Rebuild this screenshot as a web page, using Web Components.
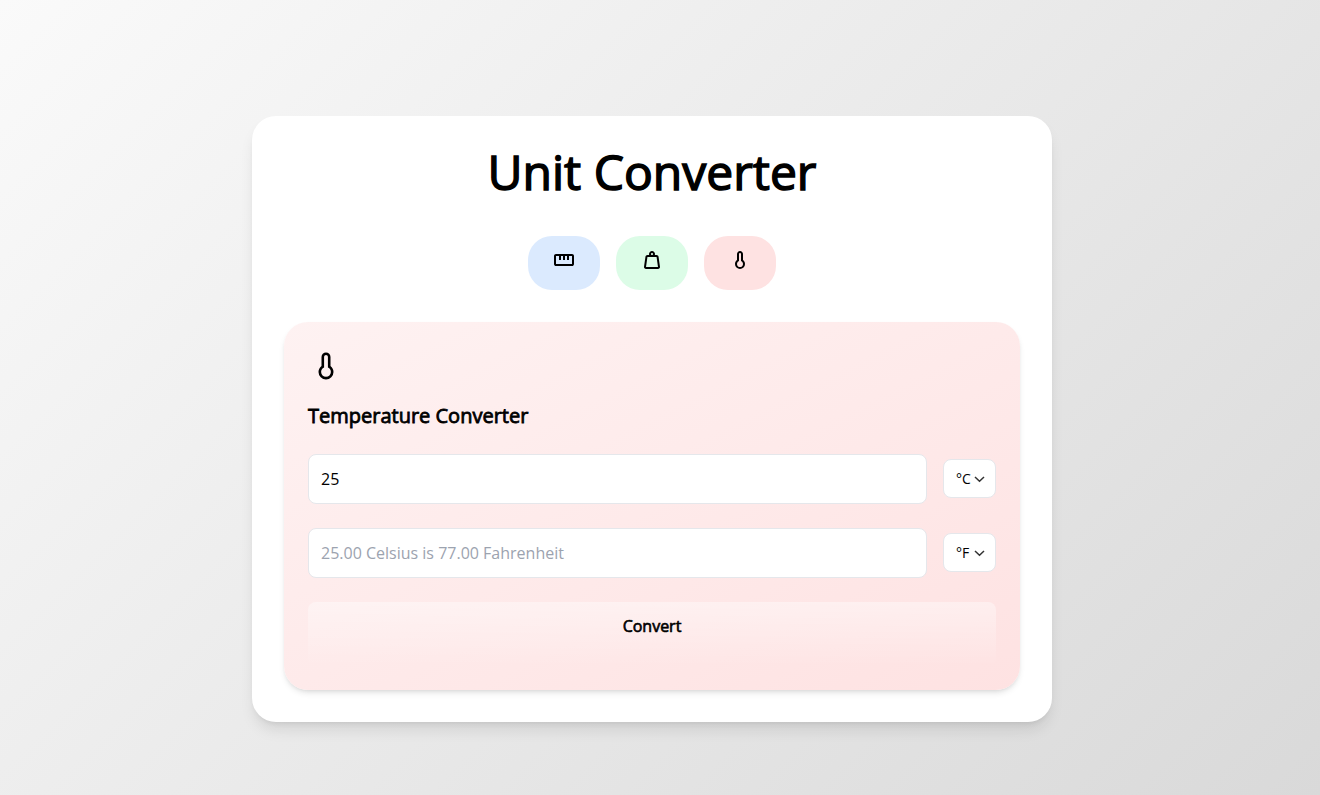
<!DOCTYPE html>
<html lang="en">
<head>
<meta charset="utf-8">
<meta name="viewport" content="width=device-width, initial-scale=1">
<title>Unit Converter</title>
<style>
  html { min-height: 100%; background: linear-gradient(135deg, #fafafa, #d9d9d9); }
  body { margin: 0; font-family: "Open Sans", "Noto Sans", sans-serif; color: #000; line-height: 24px; }
</style>
</head>
<body>
<unit-converter></unit-converter>

<script>
const ICONS = {
  ruler: 'M160-240q-33 0-56.5-23.5T80-320v-320q0-33 23.5-56.5T160-720h640q33 0 56.5 23.5T880-640v320q0 33-23.5 56.5T800-240H160Zm0-80h640v-320H680v160h-80v-160h-80v160h-80v-160h-80v160h-80v-160H160v320Z',
  weight: 'M240-200h480l-57-400H297l-57 400Zm240-480q17 0 28.5-11.5T520-720q0-17-11.5-28.5T480-760q-17 0-28.5 11.5T440-720q0 17 11.5 28.5T480-680Zm113 0h70q30 0 52 20t27 49l57 400q5 36-18.5 63.5T720-120H240q-37 0-60.5-27.5T161-211l57-400q5-29 27-49t52-20h70q-3-10-5-19.5t-2-20.5q0-50 35-85t85-35q50 0 85 35t35 85q0 11-2 20.5t-5 19.5Z',
  thermometer: 'M480-120q-83 0-141.5-58.5T280-320q0-48 21-89.5t59-70.5v-240q0-50 35-85t85-35q50 0 85 35t35 85v240q38 29 59 70.5t21 89.5q0 83-58.5 141.5T480-120Zm0-80q50 0 85-35t35-85q0-29-12.5-54T552-416l-32-24v-280q0-17-11.5-28.5T480-760q-17 0-28.5 11.5T440-720v280l-32 24q-23 17-35.5 42T360-320q0 50 35 85t85 35Z',
  /* lighter stroke for display sizes */
  thermometerLarge: 'M480-120q-83 0-141.5-58.5T280-320q0-48 21-89.5t59-70.5v-240q0-50 35-85t85-35q50 0 85 35t35 85v240q38 29 59 70.5t21 89.5q0 83-58.5 141.5T480-120Zm0-71q54 0 92-38t38-91q0-32-14-59t-39-45l-26-19v-278q0-22-15-37t-36-15q-21 0-36 15t-15 37v278l-26 19q-25 18-39 45t-14 59q0 53 38 91t92 38Z'
};

class UnitIcon extends HTMLElement {
  connectedCallback() {
    this.attachShadow({ mode: 'open' }).innerHTML = `
      <style>
        :host { display: block; width: var(--icon-size, 24px); height: var(--icon-size, 24px); }
        svg { display: block; width: 100%; height: 100%; fill: currentColor; }
      </style>
      <svg viewBox="0 -960 960 960" aria-hidden="true"><path d="${ICONS[this.getAttribute('name')]}"/></svg>`;
  }
}
customElements.define('unit-icon', UnitIcon);

class UnitTab extends HTMLElement {
  connectedCallback() {
    this.attachShadow({ mode: 'open' }).innerHTML = `
      <style>
        :host { display: block; }
        button { display: block; border: 0; border-radius: 24px; padding: 12px 24px 18px; color: inherit; background: var(--tab-color); cursor: pointer; }
      </style>
      <button type="button" aria-label="${this.getAttribute('label')}"><unit-icon name="${this.getAttribute('icon')}"></unit-icon></button>`;
  }
}
customElements.define('unit-tab', UnitTab);

class UnitField extends HTMLElement {
  connectedCallback() {
    const name = this.getAttribute('label');
    const selected = this.getAttribute('unit');
    const options = ['°C', '°F', 'K'].map(u => `<option${u === selected ? ' selected' : ''}>${u}</option>`).join('');
    this.attachShadow({ mode: 'open' }).innerHTML = `
      <style>
        :host { display: flex; align-items: center; gap: 16px; }
        input, select { box-sizing: border-box; margin: 0; font-family: inherit; color: #000; background: #fff; border: 1px solid #e5e7eb; border-radius: 8px; }
        input { flex: 1; min-width: 0; height: 50px; padding: 12px; font-size: 16px; line-height: 24px; }
        input::placeholder { color: #9ca3af; opacity: 1; }
        .unit { display: grid; grid-template-columns: 1fr 23px; align-items: center; margin-bottom: 1px; }
        select { grid-area: 1 / 1 / 2 / 3; appearance: none; width: 53px; height: 39px; padding: 0 0 0 12px; font-size: 14px; }
        svg { grid-area: 1 / 2; width: 12px; height: 12px; fill: none; stroke: #333; stroke-width: 1.5; pointer-events: none; }
      </style>
      <input type="text" aria-label="${name}" value="${this.getAttribute('value') || ''}" placeholder="${this.getAttribute('placeholder') || ''}"${this.hasAttribute('readonly') ? ' readonly' : ''}>
      <div class="unit">
        <select aria-label="${name} unit">${options}</select>
        <svg viewBox="0 0 12 12" aria-hidden="true"><path d="M2 4l4.500 4.300L11 4"/></svg>
      </div>`;
  }
}
customElements.define('unit-field', UnitField);

class ConverterPanel extends HTMLElement {
  connectedCallback() {
    this.attachShadow({ mode: 'open' }).innerHTML = `
      <style>
        :host { display: flex; flex-direction: column; gap: 24px; padding: 24px; border-radius: 24px;
          background: linear-gradient(to bottom right, #fef2f2, #fee2e2);
          box-shadow: 0 4px 6px -1px rgb(0 0 0 / .1), 0 2px 4px -2px rgb(0 0 0 / .1); }
        header { display: flex; flex-direction: column; gap: 16px; }
        unit-icon { --icon-size: 36px; padding: 2px 0; }
        h2 { margin: 0; font-size: 20px; line-height: 28px; font-weight: 400; -webkit-text-stroke: 0.04em currentColor; }
        button { height: 64px; border: 0; border-radius: 8px; padding: 12px 16px 28px; font: inherit; font-size: 16px; line-height: 24px; color: inherit; -webkit-text-stroke: 0.04em currentColor;
          background: linear-gradient(to bottom, rgb(255 255 255 / .4), rgb(255 255 255 / 0)); cursor: pointer; }
      </style>
      <header>
        <unit-icon name="thermometerLarge"></unit-icon>
        <h2><slot name="title"></slot></h2>
      </header>
      <slot></slot>
      <button type="button">Convert</button>`;
  }
}
customElements.define('converter-panel', ConverterPanel);

class UnitConverter extends HTMLElement {
  connectedCallback() {
    this.attachShadow({ mode: 'open' }).innerHTML = `
      <style>
        :host { display: block; padding: 116px 16px 64px 0; }
        main { box-sizing: border-box; max-width: 800px; margin: 0 auto; padding: 32px; border-radius: 24px; background: #fff;
          box-shadow: 0 10px 15px -3px rgb(0 0 0 / .1), 0 4px 6px -4px rgb(0 0 0 / .1); }
        h1 { margin: 0 0 40px; text-align: center; font-size: 48px; line-height: 48px; font-weight: 400; -webkit-text-stroke: 0.03em currentColor; }
        nav { display: flex; justify-content: center; gap: 16px; margin-bottom: 32px; }
      </style>
      <main>
        <h1>Unit Converter</h1>
        <nav aria-label="Converters">
          <unit-tab icon="ruler" label="Length" style="--tab-color: #dbeafe"></unit-tab>
          <unit-tab icon="weight" label="Weight" style="--tab-color: #dcfce7"></unit-tab>
          <unit-tab icon="thermometer" label="Temperature" style="--tab-color: #fee2e2"></unit-tab>
        </nav>
        <converter-panel>
          <span slot="title">Temperature Converter</span>
          <unit-field label="From" value="25" unit="°C"></unit-field>
          <unit-field label="Result" placeholder="25.00 Celsius is 77.00 Fahrenheit" unit="°F" readonly></unit-field>
        </converter-panel>
      </main>`;
  }
}
customElements.define('unit-converter', UnitConverter);
</script>
</body>
</html>
